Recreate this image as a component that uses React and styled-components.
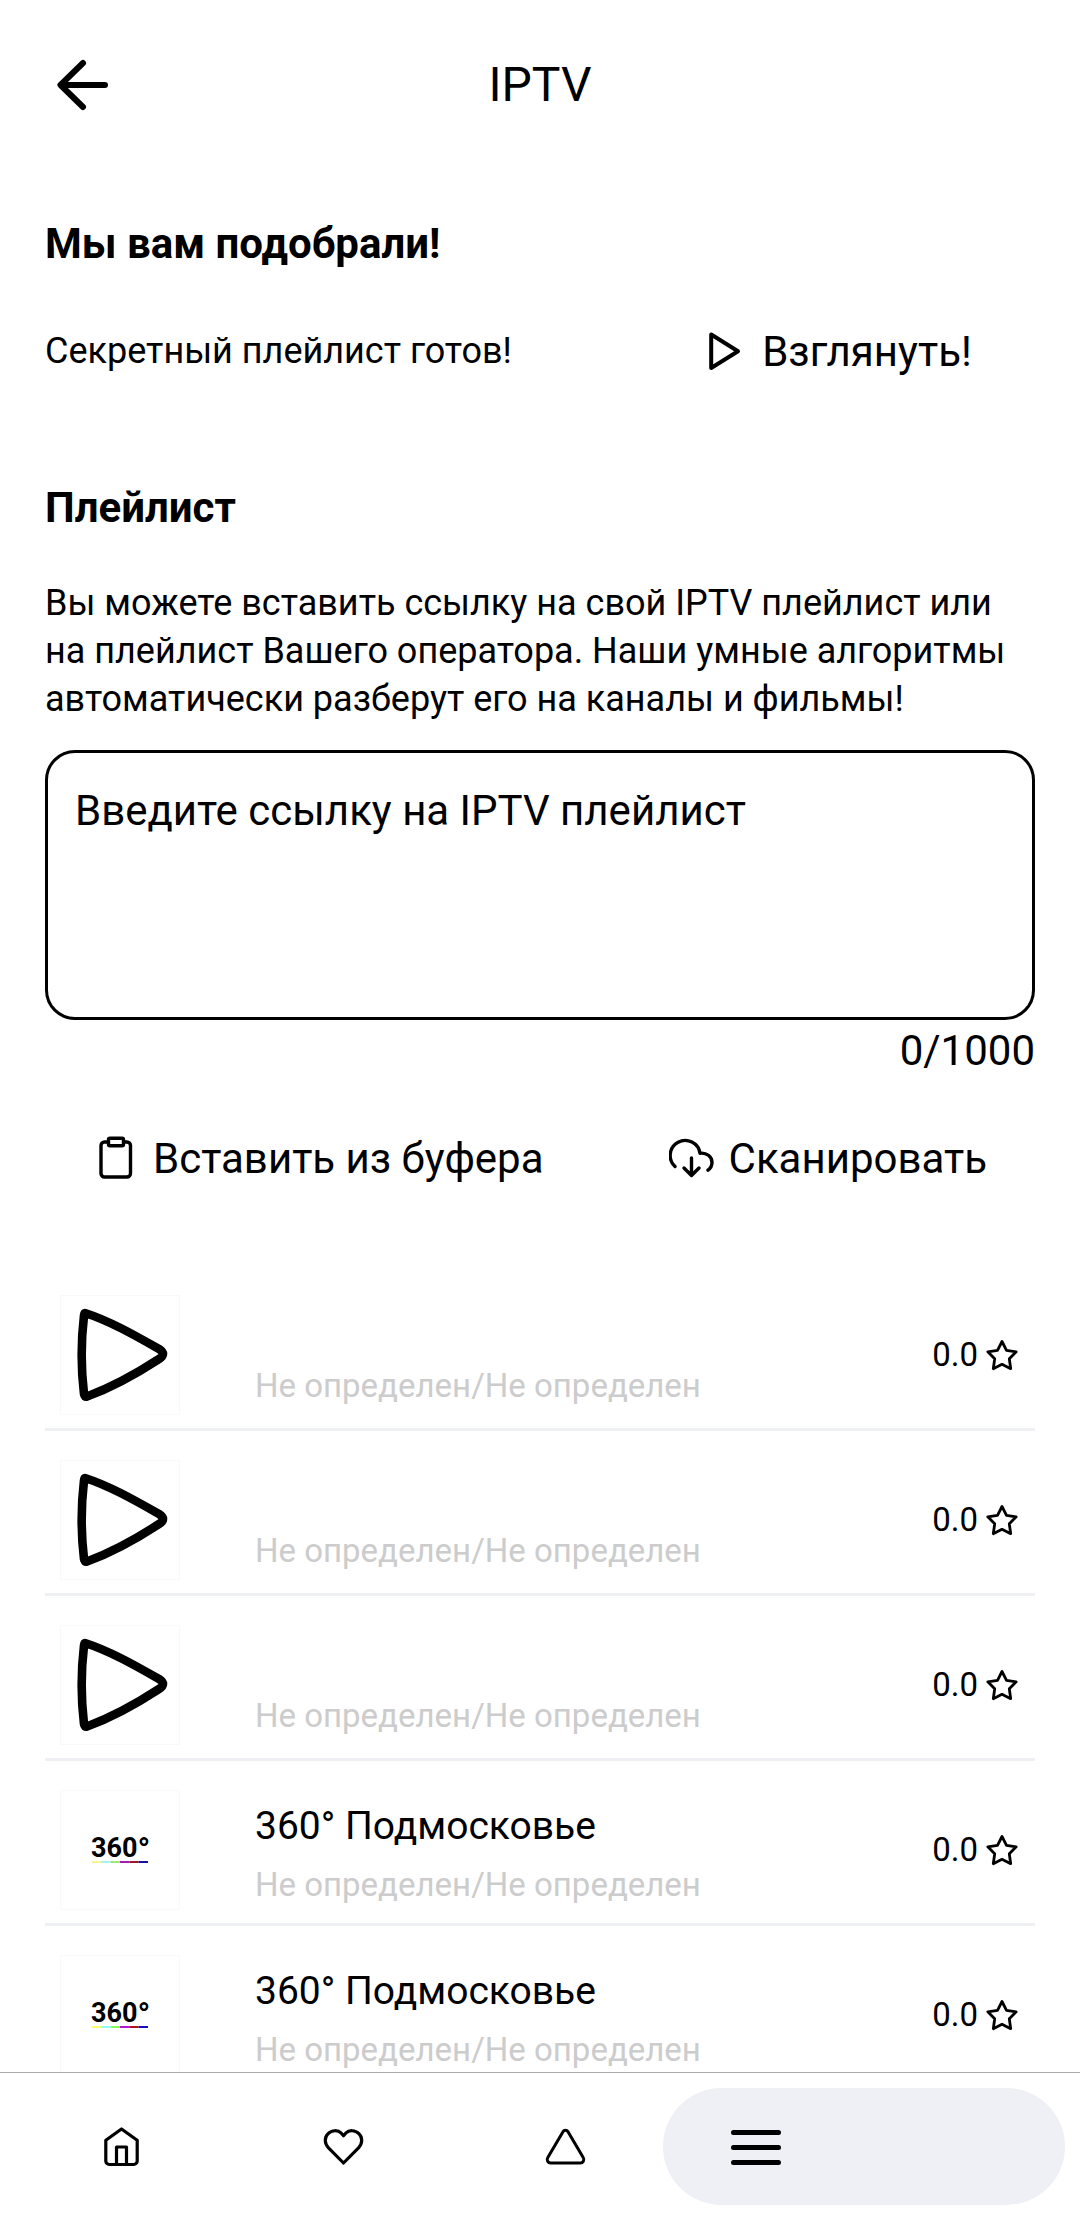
import React, { useState } from "react";
import styled, { createGlobalStyle } from "styled-components";

const GlobalStyle = createGlobalStyle`
  *, *::before, *::after { box-sizing: border-box; }
  body {
    margin: 0;
    background: #fff;
    color: #000;
    font-family: Roboto, "Noto Sans", sans-serif;
  }
  button {
    border: 0;
    padding: 0;
    background: none;
    color: inherit;
    font: inherit;
    cursor: pointer;
  }
  svg { display: block; flex: none; }
`;

const Screen = styled.div`
  display: flex;
  flex-direction: column;
  height: 100vh;
`;

const Header = styled.header`
  display: grid;
  grid-template-columns: 72px 1fr 72px;
  align-items: center;
  flex: none;
  height: 170px;
  padding: 0 45px;
`;

const Title = styled.h1`
  margin: 0;
  text-align: center;
  font-size: 48px;
  font-weight: 400;
  line-height: 56px;
`;

const Content = styled.main`
  flex: 1;
  min-height: 0;
  overflow: hidden auto;
  padding: 49px 45px 0;
  scrollbar-width: none;
`;

const Heading = styled.h2`
  margin: 0;
  font-size: 42px;
  font-weight: 700;
  line-height: 49px;
`;

const Secret = styled.div`
  display: flex;
  align-items: center;
  justify-content: space-between;
  margin: 38px 0 87px;
`;

const Text = styled.p`
  margin: 0;
  font-size: 36px;
  line-height: 48px;
`;

const ActionButton = styled.button`
  display: flex;
  align-items: center;
  justify-content: center;
  gap: 15px;
  height: 90px;
  padding: 0 48px;
  font-size: 42px;
  line-height: 49px;
  min-width: ${(p) => (p.$wide ? "40%" : "0")};
`;

const Form = styled.form`
  display: flex;
  flex-direction: column;
`;

const Description = styled.label`
  margin: 47px 0 27px;
  font-size: 36px;
  line-height: 48px;
`;

const LinkInput = styled.textarea`
  display: block;
  width: 100%;
  height: 270px;
  padding: 33px 27px;
  border: 3px solid #000;
  border-radius: 30px;
  background: #fff;
  color: #000;
  font: 400 42px/49px Roboto, "Noto Sans", sans-serif;
  resize: none;
  outline: none;

  &::placeholder {
    color: #000;
    opacity: 1;
  }
`;

const Counter = styled.output`
  align-self: flex-end;
  margin-top: 6px;
  font-size: 42px;
  line-height: 49px;
`;

const Actions = styled.div`
  display: flex;
  justify-content: space-between;
  margin: 38px 0 63px;
`;

const ChannelList = styled.ul`
  margin: 0;
  padding: 0;
  list-style: none;
`;

const ChannelRow = styled.li`
  display: flex;
  align-items: center;
  padding: 29px 15px 13px;
  border-bottom: 3px solid #eff0f4;
`;

const Thumb = styled.div`
  display: grid;
  place-items: center;
  flex: none;
  width: 120px;
  height: 120px;
  border: 1px solid #f9f9f9;
`;

const Info = styled.div`
  display: flex;
  flex: 1;
  flex-direction: column;
  gap: 15px;
  margin-left: 75px;
  padding-top: 6px;
`;

const ChannelName = styled.div`
  min-height: 40px;
  font-size: 39px;
  line-height: 48px;
`;

const ChannelMeta = styled.div`
  color: #ccc;
  font-size: 33px;
  line-height: 40px;
`;

const Rating = styled.div`
  display: flex;
  align-items: center;
  gap: 6px;
  font-size: 33px;
  line-height: 40px;
`;

const BottomNav = styled.nav`
  display: grid;
  grid-template-columns: 639fr 402fr;
  flex: none;
  height: 148px;
  padding: 15px 15px 15px 24px;
  border-top: 1px solid #aaa;
  background: #fff;
`;

const NavGroup = styled.div`
  display: flex;
  gap: 27px;
`;

const NavButton = styled.button`
  display: flex;
  flex: 1;
  align-items: center;
  justify-content: center;
`;

const ActiveNavButton = styled.button`
  display: flex;
  align-items: center;
  padding: 0 68px;
  border-radius: 60px;
  background: #eff0f5;
`;

const stroke = {
  fill: "none",
  stroke: "currentColor",
  strokeLinecap: "round",
  strokeLinejoin: "round",
  "aria-hidden": true,
};

const BackIcon = () => (
  <svg width="72" height="72" viewBox="0 0 72 72" strokeWidth="6" {...stroke}>
    <path d="M38 14 15.500 36 38 58M16 36h44" />
  </svg>
);

const PlayIcon = () => (
  <svg width="45" height="45" viewBox="0 0 45 45" strokeWidth="4" {...stroke}>
    <path d="M9.200 5.500v33.500L36 22.300Z" />
  </svg>
);

const ClipboardIcon = () => (
  <svg width="45" height="45" viewBox="0 0 45 45" strokeWidth="3.400" {...stroke}>
    <path d="M14.500 6h-3a3.500 3.500 0 0 0-3.500 3.500v28a3.500 3.500 0 0 0 3.500 3.500h22.500a3.500 3.500 0 0 0 3.500-3.500V9.500a3.500 3.500 0 0 0-3.500-3.500H31" />
    <rect x="15.500" y="2.300" width="15" height="7.500" rx="1.500" />
  </svg>
);

const CloudIcon = () => (
  <svg width="45" height="45" viewBox="0 0 45 45" strokeWidth="3.400" {...stroke}>
    <path d="M6 30.500A15 15 0 1 1 31 17.200c6.500-.8 12 3.200 12 9.300 0 3-1.500 5.800-4 7.700" />
    <path d="M22.500 22v17.500M15 32l7.500 7.500L30 32" />
  </svg>
);

const StarIcon = () => (
  <svg width="36" height="36" viewBox="0 0 36 36" strokeWidth="2.800" {...stroke}>
    <path d="m18 4.500 4.500 8.800 9.700 1.500-6.900 7 1.400 9.900-8.700-4.400-8.700 4.400 1.400-9.900-6.900-7 9.700-1.500Z" />
  </svg>
);

const PlayArtwork = () => (
  <svg width="118" height="118" viewBox="1 1 118 118" strokeWidth="8.600" {...stroke}>
    <path d="M25 18C50 26 76 41 99 54Q107 59 99 64C76 79 50 93 27 101.500Q24.500 102.500 24 99C21 74 21 46 24 20.500Q24.300 18 25 18Z" />
  </svg>
);

const LogoMark = styled.svg`
  font: 700 27px Roboto, "Noto Sans", sans-serif;
`;

const LogoDegree = styled.tspan`
  font-size: 33px;
`;

const barPalettes = {
  soft: ["#f6f590", "#a6f3f0", "#9be87c", "#a81ab4", "#9c1a28", "#1512a2"],
  vivid: ["#ffff66", "#8cfcff", "#86fb56", "#b914d8", "#b01218", "#1210c4"],
};

const Logo360 = ({ tone }) => (
  <LogoMark width="72" height="44" viewBox="0 0 72 44" role="img" aria-label="360°">
    <text x="7" y="29">
      360<LogoDegree dy="4">°</LogoDegree>
    </text>
    {barPalettes[tone].map((color, i) => (
      <rect key={color} x={8 + (i * 56) / 6} y="33" width={56 / 6} height="2" fill={color} />
    ))}
  </LogoMark>
);

const HomeIcon = () => (
  <svg width="45" height="45" viewBox="0 0 45 45" strokeWidth="3.200" {...stroke}>
    <path d="M6.800 16.300 22.500 5l15.700 11.300V37a3.500 3.500 0 0 1-3.500 3.500H10.300A3.500 3.500 0 0 1 6.800 37ZM17.500 40.500V23h10v17.500" />
  </svg>
);

const HeartIcon = () => (
  <svg width="45" height="45" viewBox="0 0 45 45" strokeWidth="3.200" {...stroke}>
    <path d="m22.500 39-15-15.200c-4.200-4.500-4.200-10.400-.6-14 4-4 10-4 13.400-.6l2.200 2.600 2.200-2.600c3.400-3.400 9.400-3.400 13.400.6 3.600 3.600 3.600 9.500-.6 14Z" />
  </svg>
);

const TriangleIcon = () => (
  <svg width="45" height="45" viewBox="0 0 45 45" strokeWidth="3" {...stroke}>
    <path d="M20 7.700a3 3 0 0 1 5 0l15.200 25.800a3.600 3.600 0 0 1-3 5.600H7.800a3.600 3.600 0 0 1-3-5.600Z" />
  </svg>
);

const MenuIcon = () => (
  <svg width="50" height="36" viewBox="0 0 50 36" strokeWidth="5" {...stroke}>
    <path d="M2.500 3.500h45M2.500 18.500h45M2.500 33.500h45" />
  </svg>
);

const channels = [
  { id: 1, name: "" },
  { id: 2, name: "" },
  { id: 3, name: "" },
  { id: 4, name: "360° Подмосковье", tone: "soft" },
  { id: 5, name: "360° Подмосковье", tone: "vivid" },
];

const Channel = ({ name, tone }) => (
  <ChannelRow>
    <Thumb>{tone ? <Logo360 tone={tone} /> : <PlayArtwork />}</Thumb>
    <Info>
      <ChannelName>{name}</ChannelName>
      <ChannelMeta>Не определен/Не определен</ChannelMeta>
    </Info>
    <Rating>
      0.0
      <StarIcon />
    </Rating>
  </ChannelRow>
);

export default function App() {
  const [link, setLink] = useState("");

  return (
    <Screen>
      <GlobalStyle />
      <Header>
        <button type="button" aria-label="Назад">
          <BackIcon />
        </button>
        <Title>IPTV</Title>
      </Header>
      <Content>
        <Heading>Мы вам подобрали!</Heading>
        <Secret>
          <Text>Секретный плейлист готов!</Text>
          <ActionButton type="button" $wide>
            <PlayIcon />
            Взглянуть!
          </ActionButton>
        </Secret>
        <Heading>Плейлист</Heading>
        <Form onSubmit={(e) => e.preventDefault()}>
          <Description htmlFor="playlist-link">
            Вы можете вставить ссылку на свой IPTV плейлист или на плейлист Вашего
            оператора. Наши умные алгоритмы автоматически разберут его на каналы и
            фильмы!
          </Description>
          <LinkInput
            id="playlist-link"
            maxLength={1000}
            placeholder="Введите ссылку на IPTV плейлист"
            value={link}
            onChange={(e) => setLink(e.target.value)}
          />
          <Counter htmlFor="playlist-link">{link.length}/1000</Counter>
          <Actions>
            <ActionButton type="button">
              <ClipboardIcon />
              Вставить из буфера
            </ActionButton>
            <ActionButton type="submit">
              <CloudIcon />
              Сканировать
            </ActionButton>
          </Actions>
        </Form>
        <ChannelList>
          {channels.map((c) => (
            <Channel key={c.id} {...c} />
          ))}
        </ChannelList>
      </Content>
      <BottomNav>
        <NavGroup>
          <NavButton type="button" aria-label="Главная">
            <HomeIcon />
          </NavButton>
          <NavButton type="button" aria-label="Избранное">
            <HeartIcon />
          </NavButton>
          <NavButton type="button" aria-label="Обзор">
            <TriangleIcon />
          </NavButton>
        </NavGroup>
        <ActiveNavButton type="button" aria-label="Меню" aria-current="page">
          <MenuIcon />
        </ActiveNavButton>
      </BottomNav>
    </Screen>
  );
}
